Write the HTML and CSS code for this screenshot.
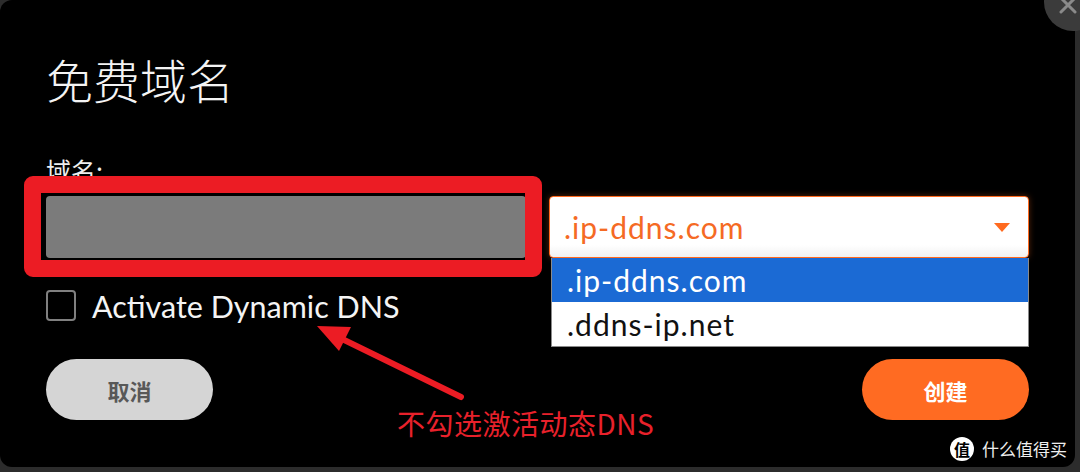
FILE: index.html
```html
<!DOCTYPE html>
<html lang="zh-CN">
<head>
<meta charset="utf-8">
<title>免费域名</title>
<link rel="stylesheet" href="styles.css">
</head>
<body>
<div class="page">
  <div class="dialog">
    <h1 class="title">免费域名</h1>
    <div class="field-label">域名:</div>
    <div class="field-row">
      <div class="input"></div>
      <div class="select">
        <span class="select-value">.ip-ddns.com</span>
        <span class="caret"></span>
        <ul class="options">
          <li class="option selected">.ip-ddns.com</li>
          <li class="option">.ddns-ip.net</li>
        </ul>
      </div>
    </div>
    <div class="check-row">
      <span class="checkbox"></span>
      <span class="check-text">Activate Dynamic DNS</span>
    </div>
    <div class="actions">
      <button class="btn btn-cancel">取消</button>
      <button class="btn btn-create">创建</button>
    </div>
  </div>

  <div class="close">
    <svg viewBox="0 0 24 24" width="24" height="24"><path d="M5 5 L19 19 M19 5 L5 19" stroke="#8a8a8a" stroke-width="3" stroke-linecap="round" fill="none"/></svg>
  </div>

  <div class="highlight"></div>

  <svg class="arrow" width="1080" height="472" viewBox="0 0 1080 472">
    <line x1="461" y1="397" x2="336" y2="336" stroke="#ec1c24" stroke-width="6" stroke-linecap="round"/>
    <polygon points="317,326 351,327 339,351" fill="#ec1c24"/>
  </svg>

  <div class="note">不勾选激活动态DNS</div>

  <div class="watermark">
    <span class="wm-logo">值</span>
    <span class="wm-text">什么值得买</span>
  </div>
</div>
</body>
</html>
```

FILE: styles.css
```css
* { box-sizing: border-box; }

html, body {
  margin: 0;
  padding: 0;
  background: #2c2c2c;
}

.page {
  position: relative;
  width: 1080px;
  height: 472px;
  overflow: hidden;
  background: #2c2c2c;
  font-family: "Noto Sans CJK SC", "Noto Sans", sans-serif;
}

.dialog {
  width: 1075px;
  height: 467px;
  background: #000;
  border-radius: 12px;
  padding: 56px 46px 0 46px;
  display: flex;
  flex-direction: column;
}

.title {
  margin: 0;
  font-size: 47px;
  line-height: 46px;
  font-weight: 300;
  color: #f4f4f4;
}

.field-label {
  margin-top: 56px;
  font-size: 25px;
  line-height: 25px;
  color: #eee;
}

.field-row {
  margin-top: 13px;
  display: flex;
  gap: 23px;
  height: 62px;
}

.input {
  width: 480px;
  height: 62px;
  background: #7b7b7b;
  border-radius: 4px;
}

.select {
  position: relative;
  width: 480px;
  height: 62px;
  background: linear-gradient(#fff 80%, #f1f1f1);
  border: 1px solid #ff6a1f;
  border-radius: 4px;
  box-shadow: 0 0 6px rgba(255, 106, 31, 0.35);
  display: flex;
  align-items: center;
  padding: 0 16px 0 14px;
}

.select-value {
  font-family: Lato, "Noto Sans", sans-serif;
  font-size: 30px;
  letter-spacing: 1px;
  color: #f56a24;
  flex: 1;
}

.caret {
  width: 0;
  height: 0;
  border-left: 8px solid transparent;
  border-right: 8px solid transparent;
  border-top: 9px solid #ff6a1f;
  margin-right: 2px;
}

.options {
  position: absolute;
  top: 61px;
  left: 1px;
  right: -1px;
  margin: 0;
  padding: 0;
  list-style: none;
  background: #fff;
  border: 1px solid #8a8a8a;
  border-top: none;
  z-index: 2;
}

.option {
  height: 44px;
  display: flex;
  align-items: center;
  padding-left: 15px;
  font-family: Lato, "Noto Sans", sans-serif;
  font-size: 30px;
  letter-spacing: 1px;
  color: #111;
}

.option.selected {
  background: #1b6ad4;
  color: #fff;
}

.check-row {
  margin-top: 32px;
  display: flex;
  align-items: center;
  gap: 16px;
  height: 31px;
}

.checkbox {
  width: 30px;
  height: 31px;
  border: 2px solid #808080;
  border-radius: 4px;
}

.check-text {
  font-family: Lato, "Noto Sans", sans-serif;
  font-size: 30.5px;
  color: #f4f4f4;
}

.actions {
  margin-top: 38px;
  display: flex;
  justify-content: space-between;
}

.btn {
  width: 167px;
  height: 61px;
  border: none;
  border-radius: 31px;
  font-family: "Noto Sans CJK SC", sans-serif;
  font-size: 22px;
  font-weight: 700;
}

.btn-cancel {
  background: #d5d5d5;
  color: #585858;
}

.btn-create {
  background: #ff6b22;
  color: #fff;
}

.close {
  position: absolute;
  left: 1044px;
  top: -27px;
  width: 58px;
  height: 58px;
  border-radius: 50%;
  background: #3b3b3b;
  display: flex;
  justify-content: center;
  align-items: flex-end;
  padding-bottom: 14px;
}

.close svg {
  margin-left: -10px;
}

.highlight {
  position: absolute;
  left: 24px;
  top: 176px;
  width: 518px;
  height: 101px;
  border: 17px solid #ec1c24;
  border-radius: 9px;
}

.arrow {
  position: absolute;
  left: 0;
  top: 0;
}

.note {
  position: absolute;
  left: 397px;
  top: 405px;
  font-size: 28px;
  letter-spacing: 0.5px;
  line-height: 36px;
  color: #e8212b;
}

.watermark {
  position: absolute;
  left: 950px;
  top: 437px;
  display: flex;
  align-items: center;
  gap: 8px;
}

.wm-logo {
  width: 24px;
  height: 24px;
  border-radius: 50%;
  background: #fff;
  color: #000;
  font-size: 16px;
  font-weight: 700;
  line-height: 24px;
  text-align: center;
}

.wm-text {
  font-size: 17px;
  line-height: 24px;
  color: #eee;
}
```
